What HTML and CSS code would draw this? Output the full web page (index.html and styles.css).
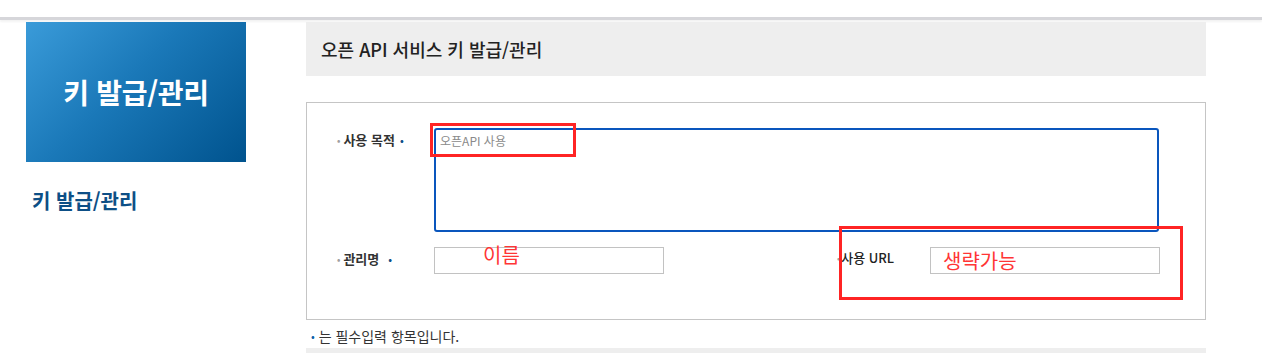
FILE: index.html
```html
<!DOCTYPE html>
<html lang="ko">
<head>
<meta charset="utf-8">
<title>키 발급/관리</title>
<link rel="stylesheet" href="styles.css">
</head>
<body>
<header class="topbar"></header>
<div class="main">
  <aside class="sidebar">
    <div class="side-banner">키 발급/관리</div>
    <div class="side-title">키 발급/관리</div>
  </aside>
  <section class="content">
    <h2 class="content-head">오픈 API 서비스 키 발급/관리</h2>
    <div class="form-box">
      <div class="row">
        <label class="label"><span class="gdot">•</span>사용 목적<span class="req">•</span></label>
        <textarea class="ta" placeholder="오픈API 사용"></textarea>
      </div>
      <div class="row row2">
        <div class="group">
          <label class="label"><span class="gdot">•</span>관리명<span class="req req-far">•</span></label>
          <input class="inp" type="text">
        </div>
        <div class="group group-right">
          <label class="label label-url"><span class="gdot gdot-tight">•</span>사용 URL</label>
          <input class="inp" type="text">
        </div>
      </div>
      <div class="mark mark1"></div>
      <div class="mark mark2"></div>
      <div class="note note1">이름</div>
      <div class="note note2">생략가능</div>
    </div>
    <p class="foot"><span class="foot-dot">•</span> 는 필수입력 항목입니다.</p>
    <div class="foot-bar"></div>
  </section>
</div>
</body>
</html>
```

FILE: styles.css
```css
* { box-sizing: border-box; }
html, body { margin: 0; padding: 0; background: #fff; overflow: hidden; }
body {
  font-family: "Noto Sans CJK KR", "Noto Sans", "Liberation Sans", sans-serif;
  color: #222;
}
.topbar {
  height: 20px;
  border-bottom: 3px solid #d6d6da;
  box-shadow: 0 2px 2px rgba(0,0,0,0.05);
}
.main {
  display: flex;
  margin-top: 2px;
  padding-left: 26px;
}
.sidebar { width: 220px; flex: none; }
.side-banner {
  height: 140px;
  display: flex;
  align-items: center;
  justify-content: center;
  background: linear-gradient(135deg, #3a9bd9 0%, #1a78b8 45%, #00538e 100%);
  color: #fff;
  font-size: 28px;
  font-weight: 700;
  letter-spacing: -0.3px;
}
.side-title {
  margin-top: 27px;
  padding-left: 6px;
  font-size: 20px;
  line-height: 24px;
  font-weight: 700;
  color: #0d4f86;
}
.content { margin-left: 60px; width: 900px; flex: none; }
.content-head {
  margin: 0;
  height: 54px;
  display: flex;
  align-items: center;
  padding-left: 15px;
  background: #eeeeee;
  font-size: 18px;
  font-weight: 500;
  color: #222;
}
.form-box {
  position: relative;
  margin-top: 26px;
  height: 218px;
  border: 1px solid #c5c5c5;
  padding: 25px 0 0 30px;
}
.row { display: flex; align-items: flex-start; }
.row2 { margin-top: 15px; }
.group { display: flex; align-items: flex-start; }
.group-right { margin-left: 173px; }
.label {
  width: 97px;
  flex: none;
  font-size: 13px;
  font-weight: 700;
  color: #333;
  line-height: 18px;
  padding-top: 3px;
  white-space: nowrap;
}
.label-url { width: 93px; font-weight: 500; color: #222; padding-top: 2px; }
.gdot { color: #a0a0a0; font-size: 9px; margin-right: 3px; vertical-align: 1px; }
.gdot-tight { margin-right: 1px; }
.req { color: #0d4f86; font-size: 10px; margin-left: 5px; vertical-align: 1px; }
.req-far { margin-left: 9px; }
.ta {
  width: 725px;
  height: 104px;
  border: 2px solid #0a56bd;
  border-radius: 3px;
  padding: 2px 4px;
  resize: none;
  font-family: inherit;
  font-size: 12px;
  line-height: 18px;
  outline: none;
}
.ta::placeholder { color: #8a8a8a; }
.inp {
  width: 230px;
  height: 27px;
  border: 1px solid #c2c2c2;
  margin: 0;
  padding: 0 6px;
  font-family: inherit;
}
.mark {
  position: absolute;
  border: 3px solid #ff2424;
}
.mark1 { left: 123px; top: 20px; width: 146px; height: 34px; }
.mark2 { left: 532px; top: 123px; width: 344px; height: 74px; }
.note {
  position: absolute;
  color: #ff3535;
  font-size: 20px;
  line-height: 20px;
}
.note1 { left: 176px; top: 142px; }
.note2 { left: 636px; top: 148px; }
.foot {
  margin: 7px 0 0 5px;
  font-size: 14px;
  line-height: 18px;
  color: #333;
}
.foot-dot { color: #0d5fa8; font-size: 11px; vertical-align: 1px; }
.foot-bar { margin-top: 3px; height: 20px; background: #eeeeee; }
```
